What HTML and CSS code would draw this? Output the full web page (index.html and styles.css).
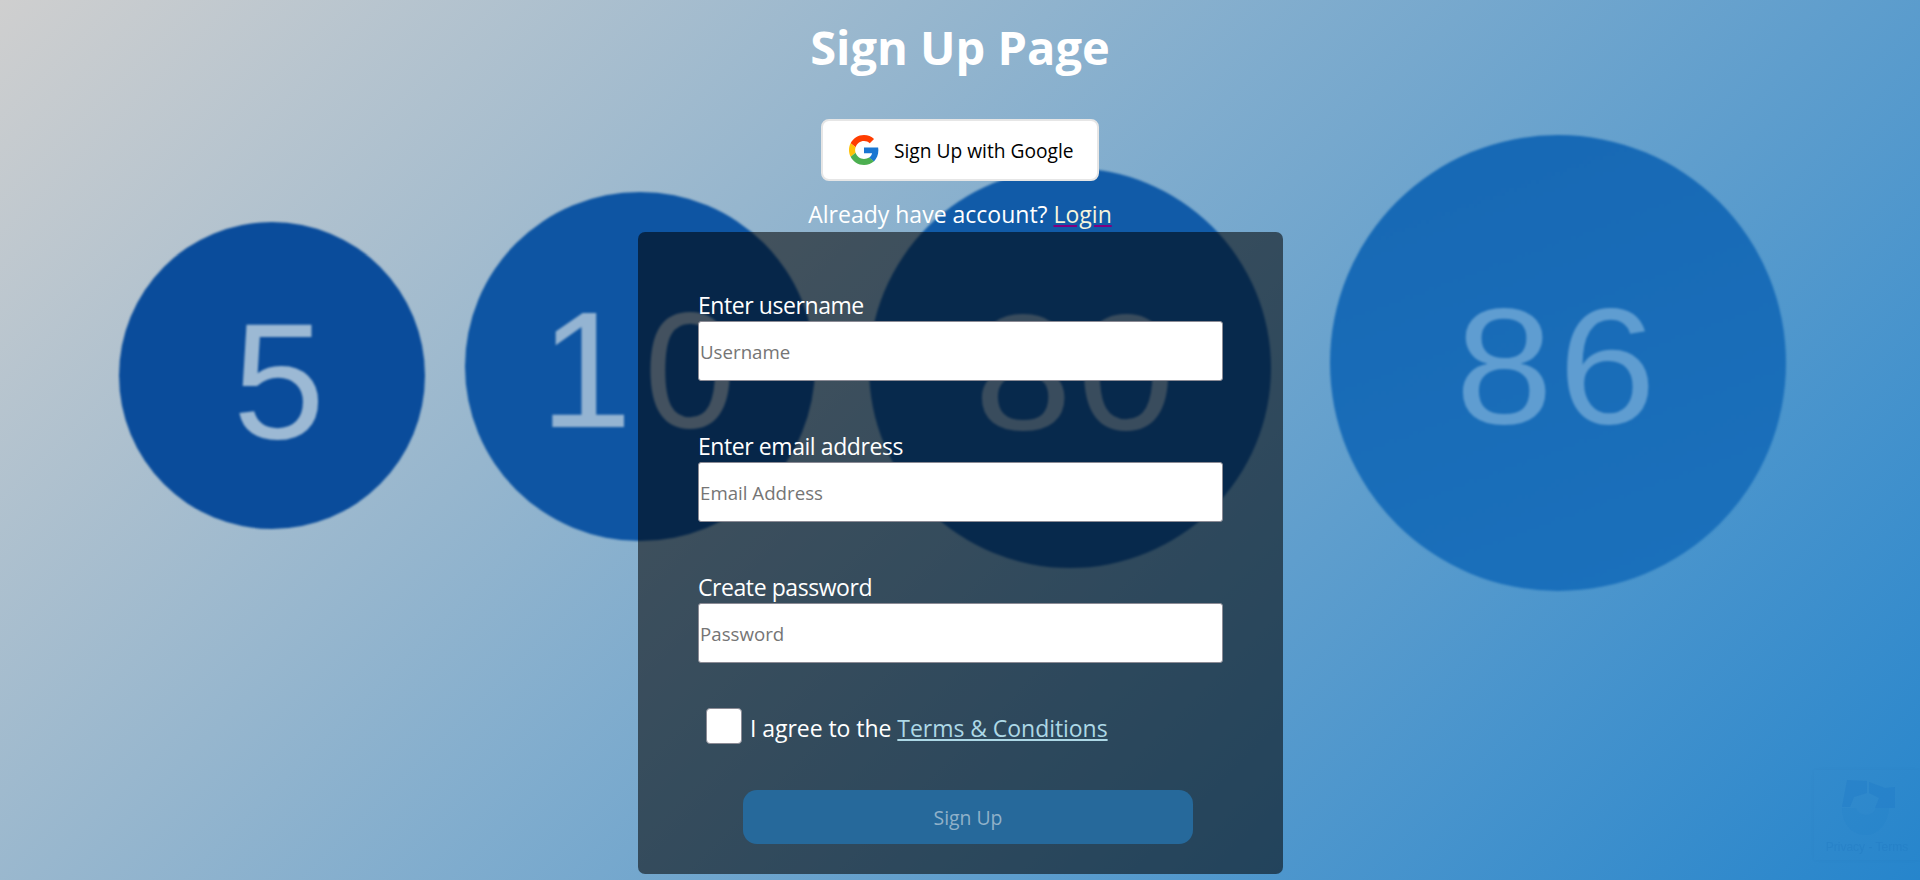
FILE: index.html
```html
<!DOCTYPE html>
<html lang="en">
<head>
<meta charset="utf-8">
<title>Sign Up Page</title>
<link rel="stylesheet" href="styles.css">
</head>
<body>
<div class="backdrop" aria-hidden="true">
  <div class="bubble bubble-5"><span class="digits">5</span></div>
  <div class="bubble bubble-10"><span class="digits">10</span></div>
  <div class="bubble bubble-80"><span class="digits">80</span></div>
  <div class="bubble bubble-86"><span class="digits">86</span></div>
</div>
<main class="page">
  <h1 class="title">Sign Up Page</h1>
  <button class="google-btn" type="button">
    <svg class="google-icon" viewBox="0 0 48 48" aria-hidden="true">
      <path fill="#FF3D00" d="M24 9.5c3.54 0 6.71 1.22 9.21 3.6l6.85-6.85C35.9 2.38 30.47 0 24 0 14.62 0 6.51 5.38 2.56 13.22l7.98 6.19C12.43 13.72 17.74 9.5 24 9.5z"/>
      <path fill="#1976D2" d="M46.98 24.55c0-1.57-.15-3.09-.38-4.55H24v9.02h12.94c-.58 2.96-2.26 5.48-4.78 7.18l7.73 6c4.51-4.18 7.09-10.36 7.09-17.65z"/>
      <path fill="#FFC107" d="M10.53 28.59c-.48-1.45-.76-2.99-.76-4.59s.27-3.14.76-4.59l-7.98-6.19C.92 16.46 0 20.12 0 24c0 3.88.92 7.54 2.56 10.78l7.97-6.19z"/>
      <path fill="#4CAF50" d="M24 48c6.48 0 11.93-2.13 15.89-5.81l-7.73-6c-2.15 1.45-4.92 2.3-8.16 2.3-6.26 0-11.57-4.22-13.47-9.91l-7.98 6.19C6.51 42.62 14.62 48 24 48z"/>
    </svg>
    <span>Sign Up with Google</span>
  </button>
  <p class="login-line">Already have account? <a class="login-link" href="#">Login</a></p>
  <form class="card">
    <div class="field">
      <label class="field-label" for="username">Enter username</label>
      <input class="field-input" id="username" type="text" placeholder="Username">
    </div>
    <div class="field">
      <label class="field-label" for="email">Enter email address</label>
      <input class="field-input" id="email" type="email" placeholder="Email Address">
    </div>
    <div class="field">
      <label class="field-label" for="password">Create password</label>
      <input class="field-input" id="password" type="password" placeholder="Password">
    </div>
    <div class="agree">
      <span class="check-box"></span>
      <span class="agree-text">I agree to the <a class="terms-link" href="#">Terms &amp; Conditions</a></span>
    </div>
    <button class="submit-btn" type="button">Sign Up</button>
  </form>
</main>
<div class="recaptcha" aria-hidden="true">
  <svg class="recaptcha-icon" viewBox="0 0 53 55">
    <path class="recaptcha-disc" d="M0 28 H14 C16 36 30 38 34 28 H47 C46 44 36 55 24 55 C10 55 0 44 0 28 Z"/>
    <path d="M0 27 L5 0 L25 1 V13 L12 17 L8 27 Z"/>
    <path d="M27 2 L43 8 L53 7 V28 H33 L37 18 L27 13 Z"/>
  </svg>
  <span class="recaptcha-text">Privacy - Terms</span>
</div>
</body>
</html>
```
FILE: styles.css
```css
* { box-sizing: border-box; }
html, body { margin: 0; height: 880px; overflow: hidden; }
body {
  position: relative;
  font-family: "Open Sans", "Noto Sans", sans-serif;
  color: #fff;
  background: linear-gradient(135deg, #cfcfcf 0%, #2685cc 100%);
}
.backdrop { position: absolute; inset: 0; }
.bubble {
  position: absolute;
  border-radius: 50%;
  display: flex;
  align-items: center;
  justify-content: center;
  filter: blur(1.2px);
}
.digits {
  font-family: "Liberation Sans", Arial, sans-serif;
  font-size: 166px;
  line-height: 1;
  position: relative;
}
.bubble-5 { left: 119px; top: 222px; width: 306px; height: 307px; background: #0a4c9b; }
.bubble-5 .digits { left: 7px; top: 5px; color: #9cb9d4; }
.bubble-10 { left: 465px; top: 192px; width: 350px; height: 349px; background: #0e55a3; }
.bubble-10 .digits { left: -2px; top: 3px; letter-spacing: 12px; margin-right: -12px; color: #94b4d2; }
.bubble-80 { left: 869px; top: 168px; width: 402px; height: 400px; background: #115ba8; }
.bubble-80 .digits { left: 5px; top: 4px; letter-spacing: 5px; margin-right: -5px; transform: scaleX(1.06); color: #7fa9cf; }
.bubble-86 { left: 1330px; top: 135px; width: 456px; height: 456px; background: linear-gradient(160deg, #1768b4, #1b71bc); }
.bubble-86 .digits { left: -2px; top: 3px; letter-spacing: 5px; margin-right: -5px; transform: scaleX(1.06); color: #5f9dd1; }

.page {
  position: relative;
  display: flex;
  flex-direction: column;
  align-items: center;
}
.title {
  margin: 15px 0 0;
  font-size: 47px;
  line-height: 64px;
  font-weight: 700;
}
.google-btn {
  margin-top: 40px;
  width: 278px;
  height: 62px;
  display: flex;
  align-items: center;
  gap: 15px;
  padding: 0 0 0 26px;
  background: #fff;
  border: 2px solid #e6e6e6;
  border-radius: 8px;
  color: #000;
  font: 19.2px "Open Sans", sans-serif;
}
.google-icon { width: 30px; height: 30px; flex: none; }
.login-line {
  margin: 16px 0 0;
  font-size: 23px;
  line-height: 35px;
}
.login-link { color: #f5f5dc; text-decoration-color: #800080; }
.card {
  width: 645px;
  height: 642px;
  margin-left: 1px;
  padding: 59px 60px 0;
  background: rgba(0, 0, 0, 0.55);
  border-radius: 7px;
}
.field { display: flex; flex-direction: column; height: 141px; }
.field-label { font-size: 23px; line-height: 28px; margin-bottom: 2px; letter-spacing: -0.43px; }
.field-input {
  width: 525px;
  height: 60px;
  padding: 0 1px;
  background: #fff;
  border: 1px solid #8b8b95;
  border-radius: 3px;
  font: 18.7px "Open Sans", sans-serif;
}
.field-input::placeholder { color: #757575; opacity: 1; }
.agree {
  margin: -6px 0 0 8px;
  height: 36px;
  display: flex;
  align-items: center;
  gap: 8px;
  font-size: 23px;
  line-height: 36px;
  letter-spacing: -0.05px;
}
.agree-text { margin-top: 4px; }
.check-box {
  width: 36px;
  height: 36px;
  background: #fff;
  border: 1px solid #8b8b95;
  border-radius: 4px;
}
.terms-link { color: #add8e6; }
.submit-btn {
  display: block;
  margin: 46px 0 0 45px;
  width: 450px;
  height: 54px;
  background: #26699b;
  border: 0;
  border-radius: 14px;
  color: #90b1c9;
  font: 19.4px "Open Sans", sans-serif;
}
.recaptcha {
  position: fixed;
  right: 0;
  top: 770px;
  width: 106px;
  height: 90px;
  display: flex;
  flex-direction: column;
  align-items: center;
  padding-top: 10px;
  gap: 5px;
  box-shadow: 0 0 5px rgba(0, 0, 0, 0.025);
  color: rgba(20, 105, 185, 0.18);
}
.recaptcha-icon { width: 53px; height: 55px; margin-left: 3px; fill: rgba(20, 110, 195, 0.22); }
.recaptcha-disc { fill: rgba(20, 110, 195, 0.07); }
.recaptcha-text { font: 12px/14px "Liberation Sans", sans-serif; }
```
